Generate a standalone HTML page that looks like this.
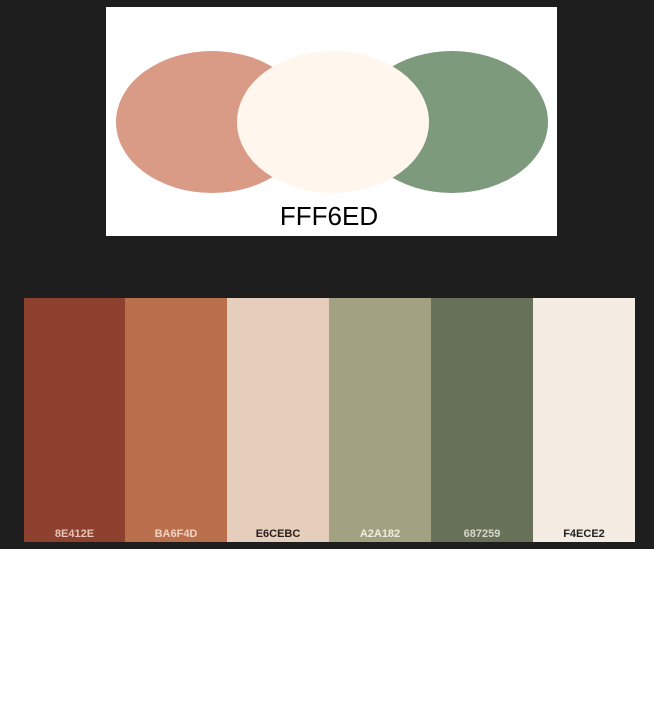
<!DOCTYPE html>
<html><head><style>
body{margin:0;width:654px;height:713px;background:#fff;position:relative;overflow:hidden;font-family:"Liberation Sans",sans-serif}
.dark{position:absolute;left:0;top:0;width:654px;height:549px;background:#1e1e1e}
.box{position:absolute;left:106px;top:7px;width:451px;height:229px;background:#fff}
.sw{position:absolute;top:298px;height:244px}
.sw span{position:absolute;bottom:2px;left:0;right:0;text-align:center;font-weight:bold;font-size:11px}
</style></head><body>
<div class="dark"></div>
<div class="box">
<svg width="451" height="229" style="position:absolute;left:0;top:0">
<ellipse cx="106" cy="115" rx="96" ry="71" fill="#d99b86"/>
<ellipse cx="346" cy="115" rx="96" ry="71" fill="#7e9a7c"/>
<ellipse cx="227" cy="115" rx="96" ry="71" fill="#fff6ed"/>
<text x="223" y="218" text-anchor="middle" font-family="Liberation Sans" font-size="26" fill="#000">FFF6ED</text>
</svg>
</div>
<div class="sw" style="left:24px;width:101px;background:#8e412e"><span style="color:#e8c4b8">8E412E</span></div>
<div class="sw" style="left:125px;width:102px;background:#ba6f4d;"><span style="color:#f4d4c4">BA6F4D</span></div>
<div class="sw" style="left:227px;width:102px;background:#e6cebc"><span style="color:#2a1e1a">E6CEBC</span></div>
<div class="sw" style="left:329px;width:102px;background:#a2a182"><span style="color:#eeeede">A2A182</span></div>
<div class="sw" style="left:431px;width:102px;background:#687259"><span style="color:#d4d8cc">687259</span></div>
<div class="sw" style="left:533px;width:102px;background:#f4ece2"><span style="color:#222">F4ECE2</span></div>
</body></html>
